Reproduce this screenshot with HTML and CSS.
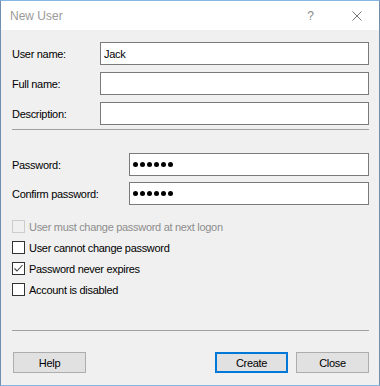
FILE: index.html
```html
<!DOCTYPE html>
<html>
<head>
<meta charset="utf-8">
<link rel="stylesheet" href="styles.css">
</head>
<body>
<div class="window">
  <div class="titlebar">
    <span class="title">New User</span>
    <span class="help-q">?</span>
    <svg class="close-x" width="10" height="10" viewBox="0 0 10 10"><path d="M0.5 0.5 L9.5 9.5 M9.5 0.5 L0.5 9.5" stroke="#777" stroke-width="1" fill="none"/></svg>
  </div>
  <div class="body">
    <div class="fields group1">
      <div class="row"><label class="lbl">User name:</label><div class="input">Jack</div></div>
      <div class="row"><label class="lbl">Full name:</label><div class="input"></div></div>
      <div class="row"><label class="lbl">Description:</label><div class="input"></div></div>
    </div>
    <div class="sep"></div>
    <div class="fields group2">
      <div class="row"><label class="lbl wide">Password:</label><div class="input pw"><i></i><i></i><i></i><i></i><i></i><i></i></div></div>
      <div class="row"><label class="lbl wide">Confirm password:</label><div class="input pw"><i></i><i></i><i></i><i></i><i></i><i></i></div></div>
    </div>
    <div class="checks">
      <div class="check disabled"><span class="box"></span><span>User must change password at next logon</span></div>
      <div class="check"><span class="box"></span><span>User cannot change password</span></div>
      <div class="check"><span class="box"><svg width="11" height="11" viewBox="0 0 11 11"><path d="M1.5 5.5 L4 8 L9.5 2" stroke="#444" stroke-width="1.1" fill="none"/></svg></span><span>Password never expires</span></div>
      <div class="check"><span class="box"></span><span>Account is disabled</span></div>
    </div>
    <div class="sep sep2"></div>
    <div class="buttons">
      <button class="btn">Help</button>
      <span class="spacer"></span>
      <button class="btn default">Create</button>
      <button class="btn">Close</button>
    </div>
  </div>
</div>
</body>
</html>
```
FILE: styles.css
```css
html, body {
  margin: 0;
  padding: 0;
  background: #ffffff;
}
.window {
  width: 380px;
  height: 386px;
  box-sizing: border-box;
  border: 1px solid #86b6e6;
  border-left-color: #6f8fb0;
  border-right-color: #6f8fb0;
  display: flex;
  flex-direction: column;
  font-family: "Liberation Sans", Arial, sans-serif;
  font-size: 11px;
  letter-spacing: -0.3px;
  color: #000;
}
.titlebar {
  height: 29px;
  background: #fff;
  display: flex;
  align-items: center;
  flex-shrink: 0;
}
.title {
  margin-left: 9px;
  font-size: 12px;
  letter-spacing: 0;
  color: #9a9a9a;
  flex: 1;
}
.help-q {
  font-size: 12px;
  color: #8a8a8a;
  margin-right: 38px;
  letter-spacing: 0;
}
.close-x {
  margin-right: 17px;
}
.body {
  flex: 1;
  background: #f0f0f0;
  padding: 12px 10px 0 11px;
  display: flex;
  flex-direction: column;
}
.fields {
  display: flex;
  flex-direction: column;
  gap: 7px;
}
.group2 {
  margin-top: 23px;
  gap: 6px;
}
.row {
  display: flex;
  align-items: center;
}
.lbl {
  width: 88px;
  flex-shrink: 0;
}
.lbl.wide {
  width: 117px;
}
.input {
  flex: 1;
  height: 23px;
  box-sizing: border-box;
  border: 1px solid #7a7a7a;
  background: #fff;
  padding: 0 3px;
  display: flex;
  align-items: center;
  font-size: 11px;
}
.input.pw {
  gap: 2px;
  padding-left: 3px;
}
.input.pw i {
  display: block;
  width: 5px;
  height: 5px;
  border-radius: 50%;
  background: #000;
}
.sep {
  height: 1px;
  background: #a0a0a0;
  margin-top: 4px;
}
.checks {
  margin-top: 15px;
  display: flex;
  flex-direction: column;
  gap: 8px;
}
.check {
  display: flex;
  align-items: center;
  height: 13px;
  gap: 4px;
}
.box {
  width: 13px;
  height: 13px;
  box-sizing: border-box;
  border: 1px solid #333;
  background: #fff;
  display: flex;
  align-items: center;
  justify-content: center;
  flex-shrink: 0;
}
.check.disabled {
  color: #8d8d8d;
}
.check.disabled .box {
  border-color: #cccccc;
  background: #f0f0f0;
}
.sep2 {
  margin-top: 34px;
}
.buttons {
  margin-top: 21px;
  display: flex;
  align-items: center;
  gap: 8px;
  padding-left: 1px;
}
.spacer {
  flex: 1;
}
.btn {
  width: 73px;
  height: 21px;
  box-sizing: border-box;
  border: 1px solid #adadad;
  background: #e1e1e1;
  font-family: "Liberation Sans", Arial, sans-serif;
  font-size: 11px;
  letter-spacing: -0.3px;
  color: #000;
  padding: 0;
  margin: 0;
}
.btn.default {
  border: 2px solid #0078d7;
}
```
